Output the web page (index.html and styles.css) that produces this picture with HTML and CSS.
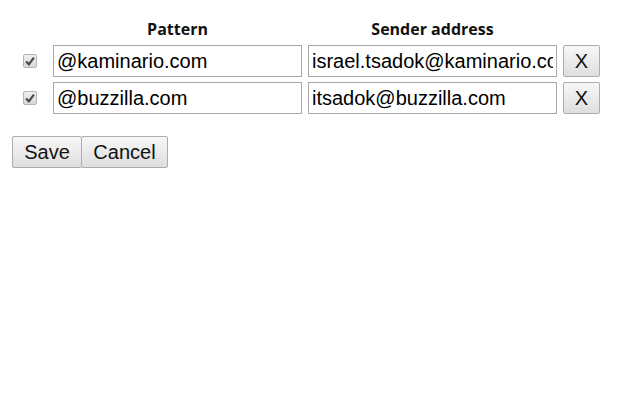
FILE: index.html
```html
<!DOCTYPE html>
<html lang="en">
<head>
    <meta charset="UTF-8">
    <title>Sender rules</title>
    <link rel="stylesheet" href="styles.css">
</head>
<body>
    <div class="container">
        <div class="rules">
            <div class="head"></div>
            <div class="head">Pattern</div>
            <div class="head">Sender address</div>
            <div class="head"></div>

            <div class="check"><span class="box"><svg width="10" height="10" viewBox="0 0 9 9"><path d="M1 5 L3.5 7.5 L8 1.5" fill="none" stroke="#4a4a4a" stroke-width="2"/></svg></span></div>
            <input type="text" class="field" value="@kaminario.com">
            <input type="text" class="field" value="israel.tsadok@kaminario.com">
            <button class="btn remove">X</button>

            <div class="check"><span class="box"><svg width="10" height="10" viewBox="0 0 9 9"><path d="M1 5 L3.5 7.5 L8 1.5" fill="none" stroke="#4a4a4a" stroke-width="2"/></svg></span></div>
            <input type="text" class="field" value="@buzzilla.com">
            <input type="text" class="field" value="itsadok@buzzilla.com">
            <button class="btn remove">X</button>
        </div>

        <div class="actions">
            <button class="btn save">Save</button><button class="btn cancel">Cancel</button>
        </div>
    </div>
</body>
</html>
```

FILE: styles.css
```css
body {
    margin: 0;
    background-color: #fff;
    font-family: "Liberation Sans", Arial, sans-serif;
}

.container {
    padding: 18px 12px 12px 18px;
}

.rules {
    display: grid;
    grid-template-columns: 29px 249px 249px 37px;
    column-gap: 6px;
    row-gap: 5px;
}

.head {
    height: 22px;
    line-height: 22px;
    text-align: center;
    font-family: "Open Sans", sans-serif;
    font-weight: bold;
    font-size: 16px;
    color: #111;
}

.check {
    display: flex;
    align-items: center;
    padding-left: 5px;
}

.box {
    flex: none;
    box-sizing: border-box;
    width: 14px;
    height: 14px;
    border: 1px solid #b4b4b4;
    border-radius: 2px;
    background: linear-gradient(#f0f0f0, #d8d8d8);
    display: flex;
    align-items: center;
    justify-content: center;
}

.field {
    box-sizing: border-box;
    width: 249px;
    height: 32px;
    margin: 0;
    padding: 0 3px;
    border: 1px solid #a9a9a9;
    font-family: "Liberation Sans", Arial, sans-serif;
    font-size: 20px;
    color: #000;
    outline: none;
}

.btn {
    box-sizing: border-box;
    height: 32px;
    margin: 0;
    padding: 0;
    border: 1px solid #adadad;
    border-radius: 2px;
    background: linear-gradient(#f7f7f7, #dedede);
    font-family: "Liberation Sans", Arial, sans-serif;
    font-size: 20px;
    color: #111;
    cursor: pointer;
}

.remove {
    width: 37px;
}

.actions {
    display: flex;
    margin-top: 22px;
    margin-left: -6px;
}

.save {
    width: 70px;
}

.cancel {
    width: 87px;
    margin-left: -1px;
}
```
